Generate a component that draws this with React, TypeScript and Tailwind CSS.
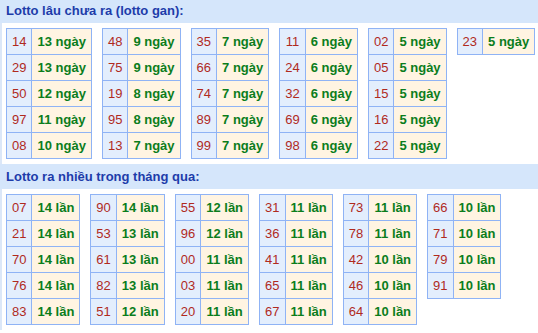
const gan: [string, string][][] = [
  [['14', '13'], ['29', '13'], ['50', '12'], ['97', '11'], ['08', '10']],
  [['48', '9'], ['75', '9'], ['19', '8'], ['95', '8'], ['13', '7']],
  [['35', '7'], ['66', '7'], ['74', '7'], ['89', '7'], ['99', '7']],
  [['11', '6'], ['24', '6'], ['32', '6'], ['69', '6'], ['98', '6']],
  [['02', '5'], ['05', '5'], ['15', '5'], ['16', '5'], ['22', '5']],
  [['23', '5']],
];

const nhieu: [string, string][][] = [
  [['07', '14'], ['21', '14'], ['70', '14'], ['76', '14'], ['83', '14']],
  [['90', '14'], ['53', '13'], ['61', '13'], ['82', '13'], ['51', '12']],
  [['55', '12'], ['96', '12'], ['00', '11'], ['03', '11'], ['20', '11']],
  [['31', '11'], ['36', '11'], ['41', '11'], ['65', '11'], ['67', '11']],
  [['73', '11'], ['78', '11'], ['42', '10'], ['46', '10'], ['64', '10']],
  [['66', '10'], ['71', '10'], ['79', '10'], ['91', '10']],
];

function LotoTable({ rows, unit }: { rows: [string, string][]; unit: string }) {
  return (
    <table className="border-collapse self-start">
      <tbody>
        {rows.map(([num, count]) => (
          <tr key={num} className="h-[26px]">
            <td className="border border-[#8fb3f5] bg-[#e3eefd] px-[5px] text-center font-normal text-[#b02a1e]">
              {num}
            </td>
            <td className="border border-[#8fb3f5] bg-[#fff4e2] px-[5px] text-center font-bold text-[#0b7d1c]">
              {count} {unit}
            </td>
          </tr>
        ))}
      </tbody>
    </table>
  );
}

function Section({
  title,
  tables,
  unit,
  first,
}: {
  title: string;
  tables: [string, string][][];
  unit: string;
  first?: boolean;
}) {
  return (
    <div>
      <div
        className={
          first
            ? 'flex h-[23px] items-center bg-[#d5e6fb] px-[6px] pb-[2px] font-bold text-[#1d3caa]'
            : 'flex h-[25px] items-center bg-[#d5e6fb] px-[6px] font-bold text-[#1d3caa]'
        }
      >
        {title}
      </div>
      <div className="flex gap-[10px] border-l-2 border-[#dbe7f8] pt-[5px] pb-[5px] pl-[4px]">
        {tables.map((rows, i) => (
          <LotoTable key={i} rows={rows} unit={unit} />
        ))}
      </div>
    </div>
  );
}

export default function App() {
  return (
    <div
      className="w-[538px] h-[333px] overflow-hidden bg-white text-[13px] leading-[15px]"
      style={{ fontFamily: '"Liberation Sans", Arial, sans-serif' }}
    >
      <Section title="Lotto lâu chưa ra (lotto gan):" tables={gan} unit="ngày" first />
      <Section title="Lotto ra nhiều trong tháng qua:" tables={nhieu} unit="lần" />
    </div>
  );
}
